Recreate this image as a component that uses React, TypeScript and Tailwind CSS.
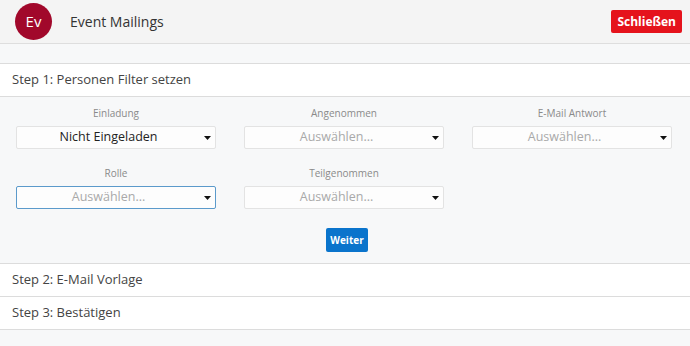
import React from "react";

const font = { fontFamily: '"Open Sans", "Noto Sans", sans-serif' };

function Caret() {
  return (
    <svg width="7" height="4" viewBox="0 0 7 4" className="shrink-0">
      <polygon points="0,0 7,0 3.5,4" fill="#111" />
    </svg>
  );
}

function Select({ label, value, focused }: { label: string; value?: string; focused?: boolean }) {
  return (
    <div className="flex flex-col items-stretch w-[200px]">
      <div className="text-[10px] leading-[14px] text-[#8a8a8a] text-center mb-[6px]">{label}</div>
      <div
        className={`h-[23px] flex items-center bg-[#fdfdfd] rounded-[2px] border pr-[4px] ${
          focused ? "border-[#5b9acb]" : "border-[#e3e3e3]"
        }`}
      >
        <span
          className={`flex-1 mr-[4px] text-center text-[12.5px] leading-none ${
            value ? "text-[#222]" : "text-[#a9a9a9]"
          }`}
        >
          {value ?? "Auswählen..."}
        </span>
        <Caret />
      </div>
    </div>
  );
}

function StepRow({ title }: { title: string }) {
  return (
    <div className="h-[33px] bg-white border-b border-[#dcdcdc] flex items-center px-3 text-[13px] text-[#444]">
      {title}
    </div>
  );
}

export default function App() {
  return (
    <div className="w-[690px] h-[346px] bg-[#f7f8f9] overflow-hidden" style={font}>
      {/* Kopfzeile */}
      <div className="h-[44px] bg-[#f4f4f4] border-b border-[#dedede] flex items-center justify-between pl-[15px] pr-[8px]">
        <div className="flex items-center">
          <div className="w-[37px] h-[37px] rounded-full bg-[#a1082b] flex items-center justify-center text-white text-[15px]">
            Ev
          </div>
          <span className="ml-[18px] text-[14px] text-[#333]">Event Mailings</span>
        </div>
        <button className="h-[23px] px-[6px] bg-[#e5131c] rounded-[2px] text-white text-[12px] font-bold leading-none">
          Schließen
        </button>
      </div>

      <div className="h-[20px] border-b border-[#dcdcdc]" />

      {/* Step 1 */}
      <div className="h-[33px] bg-white border-b border-[#dcdcdc] flex items-center px-3 text-[13px] text-[#444]">
        Step 1: Personen Filter setzen
      </div>
      <div className="h-[167px] border-b border-[#dcdcdc] bg-[#f7f8f9] pt-[9px] pl-4 flex flex-col">
        <div className="flex gap-[28px]">
          <Select label="Einladung" value="Nicht Eingeladen" />
          <Select label="Angenommen" />
          <Select label="E-Mail Antwort" />
        </div>
        <div className="flex gap-[28px] mt-[17px]">
          <Select label="Rolle" focused />
          <Select label="Teilgenommen" />
        </div>
        <div className="flex justify-center mt-[19px] pr-3">
          <button className="w-[42px] h-[24px] bg-[#0a74cc] rounded-[2px] text-white text-[10px] font-bold leading-none">
            Weiter
          </button>
        </div>
      </div>

      <StepRow title="Step 2: E-Mail Vorlage" />
      <StepRow title="Step 3: Bestätigen" />
    </div>
  );
}
